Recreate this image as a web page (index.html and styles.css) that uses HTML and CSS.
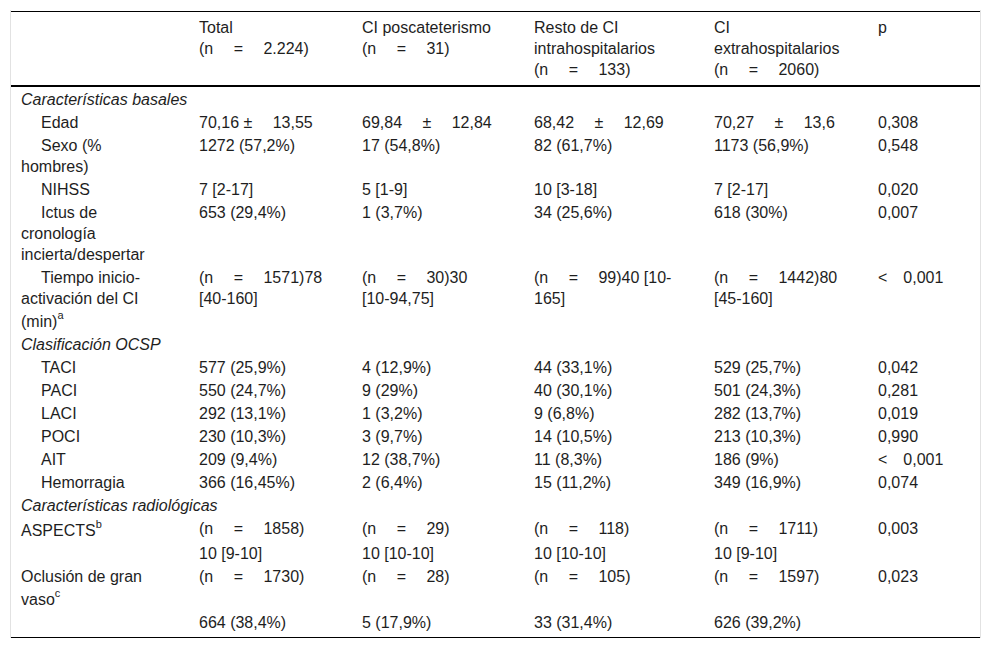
FILE: index.html
```html
<!DOCTYPE html>
<html lang="es">
<head>
<meta charset="utf-8">
<title>Tabla</title>
<link rel="stylesheet" href="styles.css">
</head>
<body>
<div class="wrap">
<table class="tbl">
<colgroup>
<col class="c-label">
<col class="c-total">
<col class="c-posc">
<col class="c-resto">
<col class="c-extra">
<col class="c-p">
</colgroup>
<thead>
<tr>
<th></th>
<th>Total<br>(n&#8195; =&#8195; 2.224)</th>
<th>CI poscateterismo<br>(n&#8195; =&#8195; 31)</th>
<th>Resto de CI<br>intrahospitalarios<br>(n&#8195; =&#8195; 133)</th>
<th>CI<br>extrahospitalarios<br>(n&#8195; =&#8195; 2060)</th>
<th>p</th>
</tr>
</thead>
<tbody>
<tr class="first"><td colspan="6" class="sec">Características basales</td></tr>
<tr><td class="ind">Edad</td><td>70,16 ±&#8195; 13,55</td><td>69,84&#8195; ±&#8195; 12,84</td><td>68,42&#8195; ±&#8195; 12,69</td><td>70,27&#8195; ±&#8195; 13,6</td><td>0,308</td></tr>
<tr><td class="ind">Sexo (%<br>hombres)</td><td>1272 (57,2%)</td><td>17 (54,8%)</td><td>82 (61,7%)</td><td>1173 (56,9%)</td><td>0,548</td></tr>
<tr><td class="ind">NIHSS</td><td>7 [2-17]</td><td>5 [1-9]</td><td>10 [3-18]</td><td>7 [2-17]</td><td>0,020</td></tr>
<tr><td class="ind">Ictus de<br>cronología<br>incierta/despertar</td><td>653 (29,4%)</td><td>1 (3,7%)</td><td>34 (25,6%)</td><td>618 (30%)</td><td>0,007</td></tr>
<tr><td class="ind">Tiempo inicio-<br>activación del CI<br>(min)<sup>a</sup></td><td>(n&#8195; =&#8195; 1571)78<br>[40-160]</td><td>(n&#8195; =&#8195; 30)30<br>[10-94,75]</td><td>(n&#8195; =&#8195; 99)40 [10-<br>165]</td><td>(n&#8195; =&#8195; 1442)80<br>[45-160]</td><td>&lt;&#8195;0,001</td></tr>
<tr><td colspan="6" class="sec">Clasificación OCSP</td></tr>
<tr><td class="ind">TACI</td><td>577 (25,9%)</td><td>4 (12,9%)</td><td>44 (33,1%)</td><td>529 (25,7%)</td><td>0,042</td></tr>
<tr><td class="ind">PACI</td><td>550 (24,7%)</td><td>9 (29%)</td><td>40 (30,1%)</td><td>501 (24,3%)</td><td>0,281</td></tr>
<tr><td class="ind">LACI</td><td>292 (13,1%)</td><td>1 (3,2%)</td><td>9 (6,8%)</td><td>282 (13,7%)</td><td>0,019</td></tr>
<tr><td class="ind">POCI</td><td>230 (10,3%)</td><td>3 (9,7%)</td><td>14 (10,5%)</td><td>213 (10,3%)</td><td>0,990</td></tr>
<tr><td class="ind">AIT</td><td>209 (9,4%)</td><td>12 (38,7%)</td><td>11 (8,3%)</td><td>186 (9%)</td><td>&lt;&#8195;0,001</td></tr>
<tr><td class="ind">Hemorragia</td><td>366 (16,45%)</td><td>2 (6,4%)</td><td>15 (11,2%)</td><td>349 (16,9%)</td><td>0,074</td></tr>
<tr><td colspan="6" class="sec">Características radiológicas</td></tr>
<tr><td>ASPECTS<sup>b</sup></td><td>(n&#8195; =&#8195; 1858)</td><td>(n&#8195; =&#8195; 29)</td><td>(n&#8195; =&#8195; 118)</td><td>(n&#8195; =&#8195; 1711)</td><td>0,003</td></tr>
<tr><td></td><td>10 [9-10]</td><td>10 [10-10]</td><td>10 [10-10]</td><td>10 [9-10]</td><td></td></tr>
<tr><td>Oclusión de gran<br>vaso<sup>c</sup></td><td>(n&#8195; =&#8195; 1730)</td><td>(n&#8195; =&#8195; 28)</td><td>(n&#8195; =&#8195; 105)</td><td>(n&#8195; =&#8195; 1597)</td><td>0,023</td></tr>
<tr class="last"><td></td><td>664 (38,4%)</td><td>5 (17,9%)</td><td>33 (31,4%)</td><td>626 (39,2%)</td><td></td></tr>
</tbody>
</table>
</div>
</body>
</html>
```

FILE: styles.css
```css
html, body {
  margin: 0;
  padding: 0;
  background: #ffffff;
}

body {
  font-family: "Liberation Sans", Arial, sans-serif;
  color: #1e1e1e;
}

.wrap {
  margin: 10px 0 0 10px;
  width: 969px;
  padding-top: 1px;
  border-left: 1px solid #e2e2e2;
  border-right: 1px solid #e2e2e2;
}

.tbl {
  width: 969px;
  table-layout: fixed;
  border-collapse: collapse;
  font-size: 16px;
  line-height: 21px;
  border-top: 1px solid #000000;
  border-bottom: 1px solid #000000;
}

.c-label { width: 178px; }
.c-total { width: 163px; }
.c-posc { width: 172px; }
.c-resto { width: 180px; }
.c-extra { width: 164px; }
.c-p { width: 112px; }

.tbl th {
  font-weight: normal;
  text-align: left;
  vertical-align: top;
  padding: 5px 10px 5px 10px;
  border-bottom: 2px solid #000000;
  white-space: nowrap;
}

.tbl td {
  text-align: left;
  vertical-align: top;
  padding: 1px 10px 1px 10px;
  white-space: nowrap;
}

.tbl tr.first td {
  padding-top: 2px;
}

.tbl tr.last td {
  padding-bottom: 4px;
}

.tbl td.sec {
  font-style: italic;
}

.tbl td.ind {
  text-indent: 20px;
}

.tbl sup {
  font-size: 11px;
  line-height: 12px;
  vertical-align: 8px;
}
```
